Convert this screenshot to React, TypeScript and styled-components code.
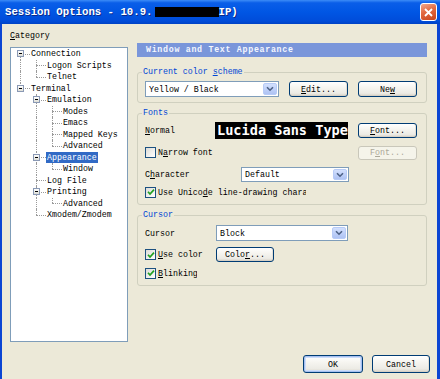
import React from "react";
import styled, { createGlobalStyle } from "styled-components";

const GlobalStyle = createGlobalStyle`
  html, body {
    margin: 0;
    padding: 0;
    background: #ECE9D8;
  }
  body {
    font-family: "Liberation Mono", "DejaVu Sans Mono", monospace;
    font-size: 8.3px;
    color: #000;
  }
`;

const Frame = styled.div`
  width: 440px;
  height: 379px;
  display: flex;
  flex-direction: column;
  overflow: hidden;
  background: #ECE9D8;
`;

const TitleBar = styled.div`
  height: 24px;
  flex: none;
  display: flex;
  align-items: center;
  padding: 0 3px 0 5px;
  background: linear-gradient(180deg, #3C8CF7 0%, #0A5EE8 12%, #0056E4 50%, #004CD9 88%, #0042C4 100%);
  color: #fff;
  font-weight: bold;
  font-size: 10.7px;
`;

const TitleText = styled.span`
  flex: 1;
  display: flex;
  align-items: center;
  white-space: nowrap;
  text-shadow: 1px 1px 0 #0A2A8A;
`;

const Redacted = styled.span`
  display: inline-block;
  width: 64px;
  height: 10px;
  background: #000;
  margin: 0 0 0 2px;
`;

const CloseButton = styled.div`
  width: 17px;
  height: 18px;
  box-sizing: border-box;
  border: 1px solid #fff;
  border-radius: 3px;
  background: linear-gradient(160deg, #F0A88C 0%, #E2683F 45%, #C8451C 100%);
  display: flex;
  align-items: center;
  justify-content: center;
`;

const Body = styled.div`
  flex: 1;
  display: flex;
  flex-direction: column;
  border-left: 2px solid #0B45D3;
  border-right: 3px solid #0B45D3;
  padding: 6px 7px 0 8px;
`;

const Main = styled.div`
  display: grid;
  grid-template-columns: 118px 290px;
  column-gap: 9px;
`;

const LeftColumn = styled.div`
  display: flex;
  flex-direction: column;
`;

const CategoryLabel = styled.div`
  height: 17px;
  line-height: 11px;
`;

const Tree = styled.div`
  height: 295px;
  box-sizing: border-box;
  border: 1px solid #7F9DB9;
  background: #fff;
  padding: 0 0 0 1px;
`;

const TreeRow = styled.div`
  height: 11.5px;
  display: flex;
  align-items: center;
  white-space: nowrap;
`;

const Cell = styled.span<{ $up?: boolean; $down?: boolean; $across?: boolean }>`
  position: relative;
  width: 16px;
  height: 100%;
  flex: none;
  display: flex;
  align-items: center;
  padding-left: 5px;
  box-sizing: border-box;

  &::before {
    content: "";
    display: ${(p) => (p.$up || p.$down ? "block" : "none")};
    position: absolute;
    left: 8px;
    top: ${(p) => (p.$up ? "0" : "50%")};
    bottom: ${(p) => (p.$down ? "0" : "50%")};
    border-left: 1px dotted #9A9A9A;
  }

  &::after {
    content: "";
    display: ${(p) => (p.$across ? "block" : "none")};
    position: absolute;
    left: 8px;
    right: -2px;
    top: 50%;
    border-top: 1px dotted #9A9A9A;
  }
`;

const Expander = styled.span`
  position: relative;
  z-index: 1;
  width: 7px;
  height: 7px;
  box-sizing: border-box;
  border: 1px solid #8A99B5;
  background: linear-gradient(180deg, #fff, #DEDED6);
  display: flex;
  align-items: center;
  justify-content: center;

  &::after {
    content: "";
    width: 3px;
    height: 1px;
    background: #000;
  }
`;

const NodeLabel = styled.span<{ $selected?: boolean }>`
  margin-left: 2px;
  padding: 0 1px;
  line-height: 11px;
  background: ${(p) => (p.$selected ? "#316AC5" : "transparent")};
  color: ${(p) => (p.$selected ? "#fff" : "#000")};
`;

const RightColumn = styled.div`
  display: flex;
  flex-direction: column;
  padding-top: 13px;
`;

const HeaderBar = styled.div`
  height: 14px;
  line-height: 14px;
  padding-left: 9px;
  background: #7A96DA;
  color: #F4F7FF;
  font-weight: bold;
  letter-spacing: 0.7px;
`;

const Group = styled.fieldset<{ $mt: number; $pt: number; $pb: number }>`
  margin: ${(p) => p.$mt}px 0 0 0;
  padding: ${(p) => p.$pt}px 9px ${(p) => p.$pb}px 7px;
  border: 1px solid #D0D0BF;
  border-radius: 3px;
  min-width: 0;
  display: flex;
  flex-direction: column;
`;

const Legend = styled.legend`
  padding: 0 1px;
  margin-left: -3px;
  line-height: 10px;
  color: #0046D5;
`;

const Row = styled.div<{ $mt?: number; $h: number }>`
  display: flex;
  align-items: center;
  height: ${(p) => p.$h}px;
  margin-top: ${(p) => p.$mt ?? 0}px;
  white-space: nowrap;
`;

const FieldLabel = styled.span<{ $w: number }>`
  width: ${(p) => p.$w}px;
  flex: none;
  display: flex;
  align-items: center;
`;

const U = styled.span`
  text-decoration: underline;
`;

const Button = styled.button<{ $w: number; $h: number; $ml?: string; $default?: boolean }>`
  width: ${(p) => p.$w}px;
  height: ${(p) => p.$h}px;
  margin-left: ${(p) => p.$ml ?? "0"};
  flex: none;
  padding: 0;
  box-sizing: border-box;
  font: inherit;
  color: #000;
  border: 1px solid #003C74;
  border-radius: 3px;
  background: linear-gradient(180deg, #FFFFFF 0%, #F6F5F0 40%, #ECEBE5 80%, #D8D2C6 100%);
  box-shadow: ${(p) =>
    p.$default
      ? "inset 0 0 0 1px #A6C0F0, inset 0 0 0 2px #CEDDF9"
      : "inset 0 -1px 0 #D6D0C5, inset -1px 0 0 #E3DFD5"};

  &:disabled {
    border-color: #C9C7BA;
    color: #ACA899;
    background: #F5F4EA;
    box-shadow: none;
  }
`;

const Combo = styled.div<{ $w: number; $h: number; $ml?: number }>`
  width: ${(p) => p.$w}px;
  height: ${(p) => p.$h}px;
  margin-left: ${(p) => p.$ml ?? 0}px;
  flex: none;
  box-sizing: border-box;
  border: 1px solid #7F9DB9;
  background: #fff;
  display: flex;
  padding: 1px;
`;

const ComboText = styled.span`
  flex: 1;
  display: flex;
  align-items: center;
  padding-left: 2px;
`;

const ComboArrow = styled.span`
  width: 14px;
  flex: none;
  box-sizing: border-box;
  border: 1px solid #B7CBF7;
  border-radius: 2px;
  background: linear-gradient(180deg, #D3E0FD 0%, #BCCEF8 60%, #AFC3F3 100%);
  display: flex;
  align-items: center;
  justify-content: center;
`;

const CheckBox = styled.span`
  width: 11px;
  height: 11px;
  flex: none;
  box-sizing: border-box;
  border: 1px solid #1C5180;
  background: linear-gradient(135deg, #DCDCD7, #FFFFFF);
  display: flex;
  align-items: center;
  justify-content: center;
  margin-right: 2px;
`;

const Clip = styled.span<{ $w: number }>`
  display: inline-block;
  width: ${(p) => p.$w}px;
  overflow: hidden;
  white-space: nowrap;
`;

const FontPreview = styled.div`
  width: 133px;
  height: 17px;
  flex: none;
  background: #000;
  color: #fff;
  font-family: "DejaVu Sans Mono", "Liberation Mono", monospace;
  font-weight: bold;
  font-size: 13.6px;
  line-height: 17px;
  padding-left: 2px;
  box-sizing: border-box;
  overflow: hidden;
  white-space: nowrap;
`;

const Footer = styled.div`
  display: flex;
  justify-content: flex-end;
  gap: 9px;
  margin-top: 13px;
`;

type TreeNode = {
  label: string;
  level: number;
  guides: boolean[];
  first?: boolean;
  last?: boolean;
  kids?: boolean;
  selected?: boolean;
};

const nodes: TreeNode[] = [
  { label: "Connection", level: 0, guides: [], first: true, kids: true },
  { label: "Logon Scripts", level: 1, guides: [true] },
  { label: "Telnet", level: 1, guides: [true], last: true },
  { label: "Terminal", level: 0, guides: [], last: true, kids: true },
  { label: "Emulation", level: 1, guides: [false], kids: true },
  { label: "Modes", level: 2, guides: [false, true] },
  { label: "Emacs", level: 2, guides: [false, true] },
  { label: "Mapped Keys", level: 2, guides: [false, true] },
  { label: "Advanced", level: 2, guides: [false, true], last: true },
  { label: "Appearance", level: 1, guides: [false], kids: true, selected: true },
  { label: "Window", level: 2, guides: [false, true], last: true },
  { label: "Log File", level: 1, guides: [false] },
  { label: "Printing", level: 1, guides: [false], kids: true },
  { label: "Advanced", level: 2, guides: [false, true], last: true },
  { label: "Xmodem/Zmodem", level: 1, guides: [false], last: true },
];

const Arrow = () => (
  <svg width="8" height="6" viewBox="0 0 8 6">
    <path d="M1 1.2 L4 4.2 L7 1.2" fill="none" stroke="#4D6185" strokeWidth="1.6" />
  </svg>
);

const Check = ({ checked }: { checked?: boolean }) => (
  <CheckBox>
    {checked && (
      <svg width="8" height="8" viewBox="0 0 8 8">
        <path d="M1 3.8 L3 6 L7 1.6" fill="none" stroke="#21A121" strokeWidth="1.7" />
      </svg>
    )}
  </CheckBox>
);

const Select = ({ value, w, h, ml }: { value: string; w: number; h: number; ml?: number }) => (
  <Combo $w={w} $h={h} $ml={ml}>
    <ComboText>{value}</ComboText>
    <ComboArrow>
      <Arrow />
    </ComboArrow>
  </Combo>
);

const TreeItem = ({ node }: { node: TreeNode }) => (
  <TreeRow>
    {node.guides.map((g, i) => (
      <Cell key={i} $up={g} $down={g} />
    ))}
    <Cell $up={!(node.level === 0 && node.first)} $down={!node.last} $across>
      {node.kids && <Expander />}
    </Cell>
    <NodeLabel $selected={node.selected}>{node.label}</NodeLabel>
  </TreeRow>
);

export default function App() {
  return (
    <>
      <GlobalStyle />
      <Frame>
        <TitleBar>
          <TitleText>
            Session Options - 10.9.<Redacted />IP)
          </TitleText>
          <CloseButton>
            <svg width="9" height="9" viewBox="0 0 9 9">
              <path d="M1 1 L8 8 M8 1 L1 8" stroke="#fff" strokeWidth="1.8" />
            </svg>
          </CloseButton>
        </TitleBar>

        <Body>
          <Main>
            <LeftColumn>
              <CategoryLabel>
                <U>C</U>ategory
              </CategoryLabel>
              <Tree>
                {nodes.map((n, i) => (
                  <TreeItem key={i} node={n} />
                ))}
              </Tree>
            </LeftColumn>

            <RightColumn>
              <HeaderBar>Window and Text Appearance</HeaderBar>

              <Group $mt={10} $pt={4} $pb={5}>
                <Legend>
                  Current color <U>s</U>cheme
                </Legend>
                <Row $h={16}>
                  <Select value="Yellow / Black" w={134} h={16} />
                  <Button $w={59} $h={16} $ml="10px">
                    <U>E</U>dit...
                  </Button>
                  <Button $w={59} $h={16} $ml="10px">
                    Ne<U>w</U>
                  </Button>
                </Row>
              </Group>

              <Group $mt={5} $pt={4} $pb={6}>
                <Legend>Fonts</Legend>
                <Row $h={17}>
                  <FieldLabel $w={70}>
                    <span>
                      <U>N</U>ormal
                    </span>
                  </FieldLabel>
                  <FontPreview>Lucida Sans Typewriter</FontPreview>
                  <Button $w={59} $h={15} $ml="auto">
                    <U>F</U>ont...
                  </Button>
                </Row>
                <Row $h={15} $mt={6}>
                  <Check />
                  <span>
                    N<U>a</U>rrow font
                  </span>
                  <Button $w={59} $h={14} $ml="auto" disabled>
                    F<U>o</U>nt...
                  </Button>
                </Row>
                <Row $h={15} $mt={7}>
                  <FieldLabel $w={96}>
                    <span>
                      C<U>h</U>aracter
                    </span>
                  </FieldLabel>
                  <Select value="Default" w={108} h={15} />
                </Row>
                <Row $h={12} $mt={4}>
                  <Check checked />
                  <Clip $w={148}>
                    Use Unico<U>d</U>e line-drawing characters
                  </Clip>
                </Row>
              </Group>

              <Group $mt={5} $pt={5} $pb={6}>
                <Legend>Cursor</Legend>
                <Row $h={16}>
                  <FieldLabel $w={71}>Cursor</FieldLabel>
                  <Select value="Block" w={132} h={16} />
                </Row>
                <Row $h={15} $mt={6}>
                  <FieldLabel $w={71}>
                    <Check checked />
                    <span>
                      <U>U</U>se color
                    </span>
                  </FieldLabel>
                  <Button $w={58} $h={15}>
                    Colo<U>r</U>...
                  </Button>
                </Row>
                <Row $h={12} $mt={5}>
                  <Check checked />
                  <Clip $w={39}>
                    <U>B</U>linking
                  </Clip>
                </Row>
              </Group>
            </RightColumn>
          </Main>

          <Footer>
            <Button $w={60} $h={18} $default>
              OK
            </Button>
            <Button $w={58} $h={18}>
              Cancel
            </Button>
          </Footer>
        </Body>
      </Frame>
    </>
  );
}
